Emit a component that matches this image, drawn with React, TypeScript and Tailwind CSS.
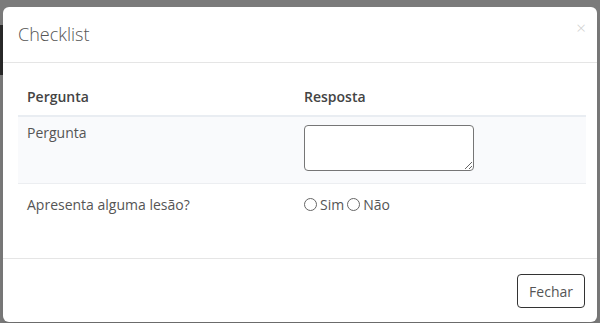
export default function App() {
  return (
    <div
      className="relative h-[323px] w-[600px] overflow-hidden bg-[#7b7b7b]"
      style={{ fontFamily: '"Open Sans", "Liberation Sans", sans-serif' }}
    >
      <div className="absolute left-0 top-[25px] h-[50px] w-[3px] bg-[#2a2a2a]" />
      <div className="absolute left-[3px] top-[7px] w-[594px] rounded-md bg-white shadow-lg">
        <div className="flex h-[56px] items-center justify-between border-b border-[#e5e5e5] pl-[15px] pr-[11px]">
          <h4 className="text-[18px] font-light text-[#555]">Checklist</h4>
          <button className="mb-[15px] text-[17px] font-light leading-none text-[#cfcfcf]">×</button>
        </div>
        <div className="px-[15px] pb-[34px] pt-[15px]">
          <table className="w-[568px] border-collapse text-[14px] text-[#555]">
            <thead>
              <tr className="border-b-2 border-[#e9edf2]">
                <th className="h-[38px] w-[286px] px-[9px] text-left align-middle font-semibold text-[#444]">Pergunta</th>
                <th className="px-[0px] text-left align-middle font-semibold text-[#444]">Resposta</th>
              </tr>
            </thead>
            <tbody>
              <tr className="border-b border-[#eceef1] bg-[#f9fafc]">
                <td className="h-[67px] px-[9px] pt-[5px] align-top">Pergunta</td>
                <td className="pt-[8px] align-top">
                  <textarea className="block h-[46px] w-[170px] rounded-sm border border-[#767676] bg-white" />
                </td>
              </tr>
              <tr>
                <td className="h-[41px] px-[9px] pt-[2px] align-middle">Apresenta alguma lesão?</td>
                <td className="pt-[2px] align-middle">
                  <div className="flex items-center">
                    <span className="mr-[3px] inline-block h-[13px] w-[13px] rounded-full border border-[#666]" />
                    <span className="mr-[3px]">Sim</span>
                    <span className="mr-[3px] inline-block h-[13px] w-[13px] rounded-full border border-[#666]" />
                    <span>Não</span>
                  </div>
                </td>
              </tr>
            </tbody>
          </table>
        </div>
        <div className="flex justify-end border-t border-[#e5e5e5] px-[12px] pb-[14px] pt-[15px]">
          <button className="h-[34px] rounded border border-[#333] px-[11px] text-[14px] text-[#555]">Fechar</button>
        </div>
      </div>
    </div>
  );
}
